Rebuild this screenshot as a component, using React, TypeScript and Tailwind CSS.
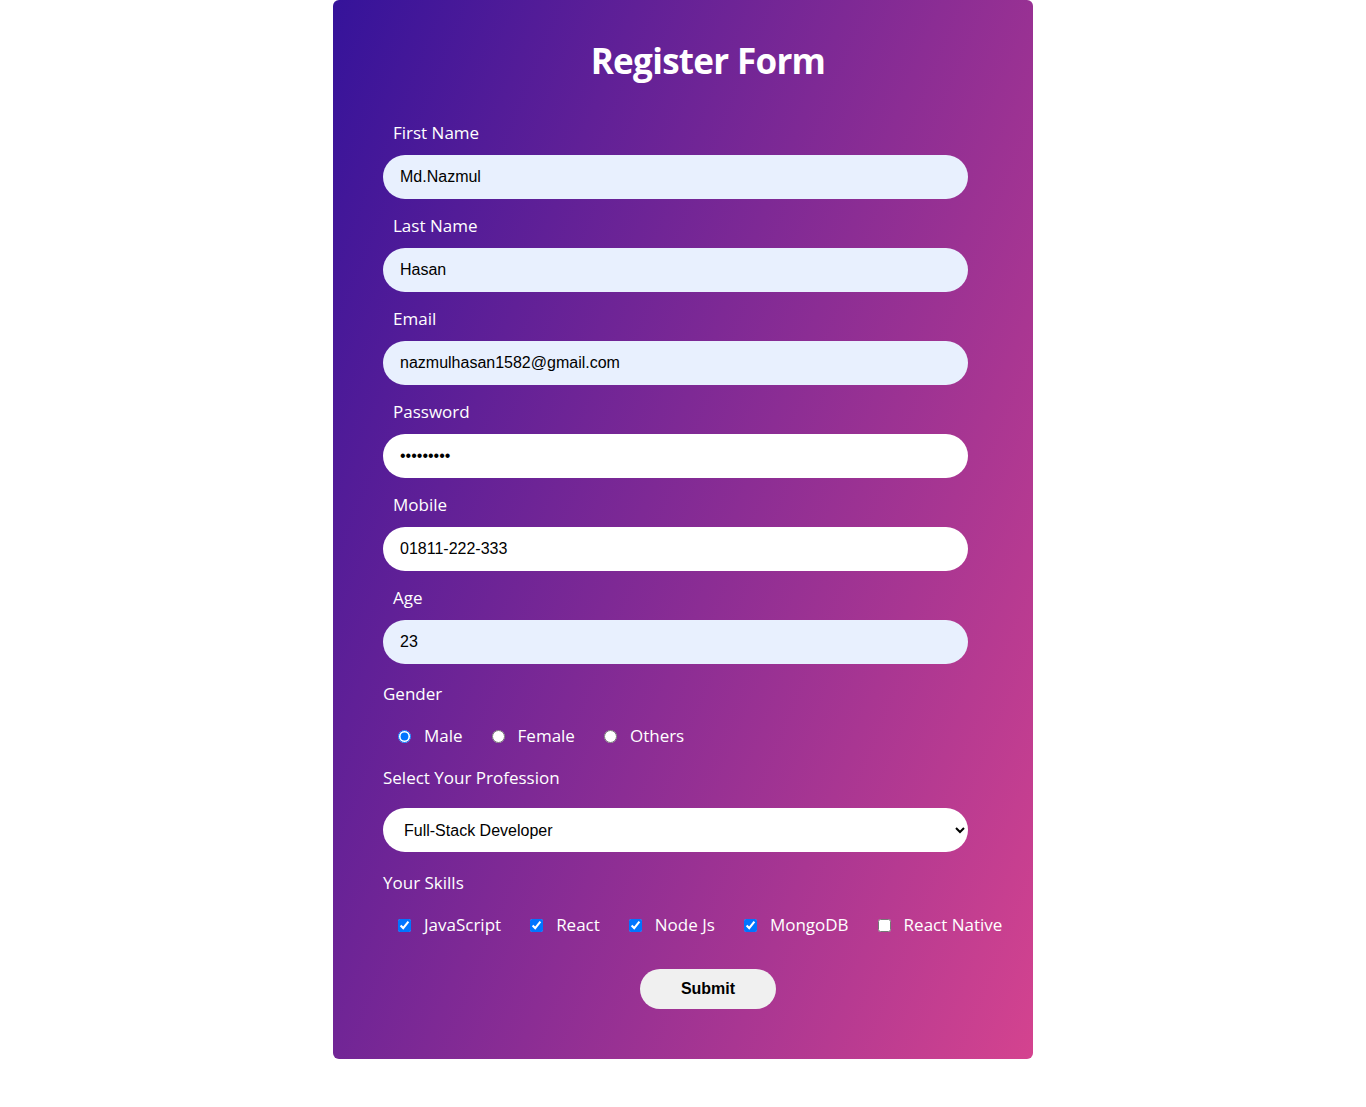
import React from "react";

const font = { fontFamily: '"Open Sans", "Noto Sans", sans-serif' };

function Field({ label, value, type = "text", autofill = true }: { label: string; value: string; type?: string; autofill?: boolean }) {
  return (
    <div className="mb-[15px]">
      <label className="block ml-[10px] text-[17px] leading-[24px] text-white">{label}</label>
      <input
        type={type}
        defaultValue={value}
        className={`mt-[10px] block h-[44px] w-[90%] rounded-full border-0 pl-[17px] text-[16px] text-black outline-none ${autofill ? "bg-[#e8f0fe]" : "bg-white"}`}
        style={{ fontFamily: '"Liberation Sans", Arial, sans-serif' }}
      />
    </div>
  );
}

export default function App() {
  const skills = [
    { name: "JavaScript", checked: true },
    { name: "React", checked: true },
    { name: "Node Js", checked: true },
    { name: "MongoDB", checked: true },
    { name: "React Native", checked: false },
  ];
  return (
    <div className="min-h-[1107px] bg-white" style={font}>
      <div className="mx-auto w-[700px] rounded-[6px] bg-[linear-gradient(112deg,#35139a,#d4438f)] pt-[39px] pb-[50px] pl-[50px]">
        <h1 className="mb-[38px] h-[44px] text-center text-[35px] font-bold leading-[44px] tracking-[-0.7px] text-white">Register Form</h1>
        <Field label="First Name" value="Md.Nazmul" />
        <Field label="Last Name" value="Hasan" />
        <Field label="Email" value="nazmulhasan1582@gmail.com" />
        <Field label="Password" value="123456789" type="password" autofill={false} />
        <Field label="Mobile" value="01811-222-333" autofill={false} />
        <div className="mb-[18px]">
          <label className="block ml-[10px] text-[17px] leading-[24px] text-white">Age</label>
          <input
            defaultValue="23"
            className="mt-[10px] block h-[44px] w-[90%] rounded-full border-0 bg-[#e8f0fe] pl-[17px] text-[16px] text-black outline-none"
            style={{ fontFamily: '"Liberation Sans", Arial, sans-serif' }}
          />
        </div>
        <div className="text-[17px] leading-[24px] text-white">Gender</div>
        <div className="mt-[18px] flex h-[24px] items-center gap-[29px] pl-[15px] text-[17px] text-white">
          {["Male", "Female", "Others"].map((g, i) => (
            <label key={g} className="flex items-center">
              <input type="radio" name="gender" defaultChecked={i === 0} className="m-0 h-[13px] w-[13px]" />
              <span className="ml-[13px]">{g}</span>
            </label>
          ))}
        </div>
        <div className="mt-[18px] text-[17px] leading-[24px] text-white">Select Your Profession</div>
        <select
          defaultValue="fs"
          className="mt-[18px] block h-[44px] w-[90%] rounded-full border-0 bg-white pl-[17px] pr-[6px] text-[16px] text-black outline-none"
          style={{ fontFamily: '"Liberation Sans", Arial, sans-serif' }}
        >
          <option value="fe">Frontend Developer</option>
          <option value="be">Backend Developer</option>
          <option value="fs">Full-Stack Developer</option>
        </select>
        <div className="mt-[19px] text-[17px] leading-[24px] text-white">Your Skills</div>
        <div className="mt-[18px] flex h-[24px] items-center gap-[29px] pl-[15px] text-[17px] text-white">
          {skills.map((s) => (
            <label key={s.name} className="flex items-center">
              <input type="checkbox" defaultChecked={s.checked} className="m-0 h-[13px] w-[13px]" />
              <span className="ml-[13px]">{s.name}</span>
            </label>
          ))}
        </div>
        <div className="mt-[32px] flex justify-center">
          <button
            className="h-[40px] w-[136px] rounded-full bg-[#f0f0f0] text-[16px] font-bold text-black"
            style={{ fontFamily: '"Liberation Sans", Arial, sans-serif' }}
          >
            Submit
          </button>
        </div>
      </div>
    </div>
  );
}
